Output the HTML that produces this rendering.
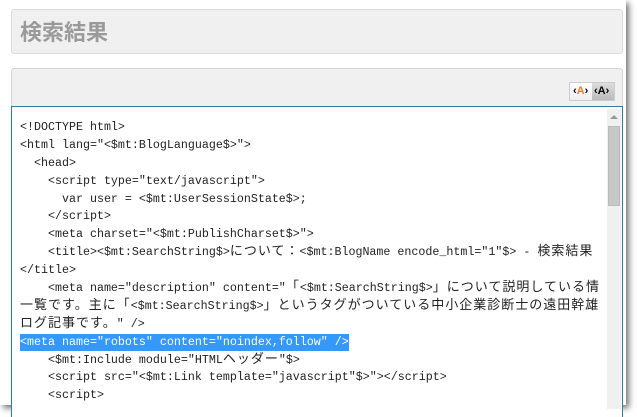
<!DOCTYPE html>
<html><head><meta charset="utf-8"><style>
body{margin:0;width:637px;height:414px;background:#fff;position:relative;overflow:hidden}
.frame{position:absolute;left:0;top:0;width:626px;height:405px;background:#fff;box-shadow:3px 3px 6px rgba(0,0,0,.55)}
.t{position:absolute;left:11px;top:9px;width:610px;height:43px;background:#f0f0f0;border:1px solid #dcdcdc;border-radius:3px}
.t span{position:absolute;left:8px;top:7px;font:bold 22px "Noto Sans CJK JP",sans-serif;color:#9a9a9a;line-height:28px}
.p{position:absolute;left:11px;top:68px;width:610px;height:345px;background:#f0f0f0;border:1px solid #d4d4d4;border-radius:3px}
.b{position:absolute;left:569px;top:82px;width:44px;height:17px;border:1px solid #ccc;background:linear-gradient(#fff,#eee);font:bold 11px "Liberation Sans",sans-serif}
.b i{position:absolute;top:2px;font-style:normal}
.ta{position:absolute;left:11px;top:106px;width:610px;height:310px;background:#fff;border:1px solid #2a7fa8;border-bottom:none}
.sb{position:absolute;left:595px;top:2px;width:14px;height:300px;background:#f0f0f0}
.th{position:absolute;left:1px;top:17px;width:12px;height:80px;background:#c8c8c8;border:1px solid #bbb;box-sizing:border-box}
.code{position:absolute;left:8px;top:12px;font-family:"Liberation Mono",monospace;font-size:11.67px;line-height:17.9px;color:#222;white-space:pre}
.code div{height:17.9px;line-height:17.9px}
.j{font-family:"Noto Sans CJK JP",sans-serif;font-size:13px;letter-spacing:1px;line-height:1px}
.hl{background:#3399ff;color:#fff;display:inline-block;line-height:17px}
</style></head><body>
<div class="frame">
<div class="t"><span>検索結果</span></div>
<div class="p"></div>
<div class="b"><i style="left:3px;color:#f08000"><span style="color:#003">‹</span>A<span style="color:#003">›</span></i><i style="left:22px;width:22px;height:17px;top:0;line-height:17px;padding-left:2px;box-sizing:border-box;background:linear-gradient(#ddd,#bbb);color:#000">‹A›</i></div>
<div class="ta"><div class="sb"><div style="position:absolute;left:3px;top:6px;border:4px solid transparent;border-bottom:4px solid #999;border-top:none"></div><div class="th"></div></div>
<div class="code"><div>&lt;!DOCTYPE html&gt;</div><div>&lt;html lang="&lt;$mt:BlogLanguage$&gt;"&gt;</div><div>  &lt;head&gt;</div><div>    &lt;script type="text/javascript"&gt;</div><div>      var user = &lt;$mt:UserSessionState$&gt;;</div><div>    &lt;/script&gt;</div><div>    &lt;meta charset="&lt;$mt:PublishCharset$&gt;"&gt;</div><div>    &lt;title&gt;&lt;$mt:SearchString$&gt;<span class="j">について：</span>&lt;$mt:BlogName encode_html="1"$&gt; - <span class="j">検索結果</span></div><div>&lt;/title&gt;</div><div>    &lt;meta name="description" content="<span class="j">「</span>&lt;$mt:SearchString$&gt;<span class="j">」について説明している情</span></div><div><span class="j">一覧です。主に「</span>&lt;$mt:SearchString$&gt;<span class="j">」というタグがついている中小企業診断士の遠田幹雄</span></div><div><span class="j">ログ記事です。</span>" /&gt;</div><div><span class="hl">&lt;meta name="robots" content="noindex,follow" /&gt;</span></div><div>    &lt;$mt:Include module="HTML<span class="j">ヘッダー</span>"$&gt;</div><div>    &lt;script src="&lt;$mt:Link template="javascript"$&gt;"&gt;&lt;/script&gt;</div><div>    &lt;script&gt;</div></div>
</div>
</div>
</body></html>
